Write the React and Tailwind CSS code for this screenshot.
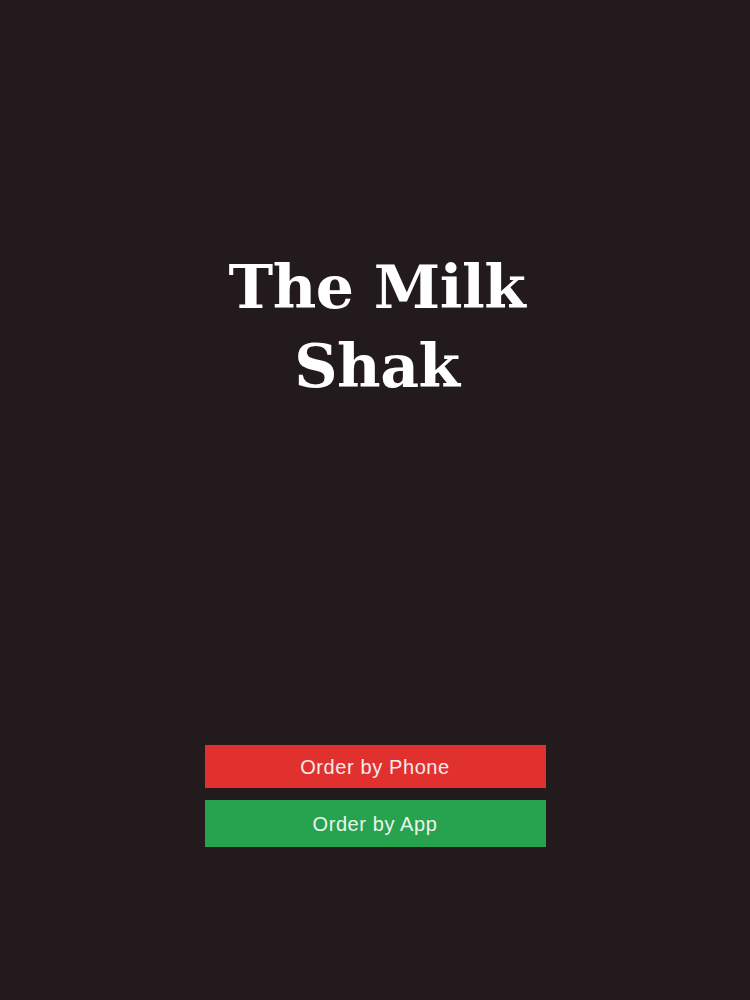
export default function App() {
  return (
    <div className="flex h-[1000px] w-full flex-col items-center bg-[#231a1d]">
      {/* Title */}
      <h1 className="mt-[248px] pl-[4px] text-center font-['DejaVu_Serif',serif] text-[60px] font-bold leading-[79px] tracking-[-0.5px] text-white">
        The Milk
        <br />
        Shak
      </h1>

      {/* Order buttons */}
      <div className="mt-[339px] flex w-[341px] flex-col gap-3">
        <button className="h-[43px] w-full bg-[#e0312f] font-['Liberation_Sans',sans-serif] text-[20px] tracking-[0.6px] text-[#f5eaea]">
          Order by Phone
        </button>
        <button className="h-[47px] w-full bg-[#27a24f] font-['Liberation_Sans',sans-serif] text-[20px] tracking-[0.6px] text-[#eaf5ec]">
          Order by App
        </button>
      </div>
    </div>
  );
}
